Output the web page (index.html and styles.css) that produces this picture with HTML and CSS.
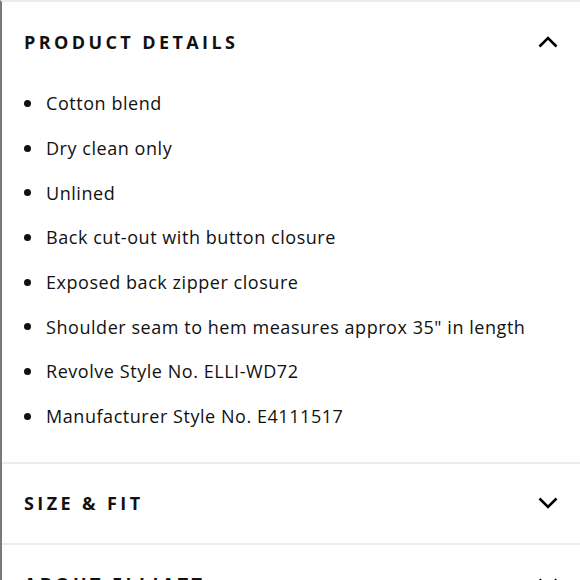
FILE: index.html
```html
<!DOCTYPE html>
<html>
<head>
<meta charset="utf-8">
<link rel="stylesheet" href="styles.css">
</head>
<body>
<div class="panel">
  <section class="acc open">
    <div class="acc-head">
      <h2 class="acc-title">PRODUCT DETAILS</h2>
      <svg class="chev" width="20" height="12" viewBox="0 0 20 12"><polyline points="1.5,10.5 10,2 18.5,10.5" fill="none" stroke="#000" stroke-width="2.6"/></svg>
    </div>
    <ul class="details">
      <li>Cotton blend</li>
      <li>Dry clean only</li>
      <li>Unlined</li>
      <li>Back cut-out with button closure</li>
      <li>Exposed back zipper closure</li>
      <li>Shoulder seam to hem measures approx 35" in length</li>
      <li>Revolve Style No. ELLI-WD72</li>
      <li>Manufacturer Style No. E4111517</li>
    </ul>
  </section>
  <section class="acc">
    <div class="acc-head">
      <h2 class="acc-title">SIZE &amp; FIT</h2>
      <svg class="chev" width="20" height="12" viewBox="0 0 20 12"><polyline points="1.5,1.5 10,10 18.5,1.5" fill="none" stroke="#000" stroke-width="2.6"/></svg>
    </div>
  </section>
  <section class="acc">
    <div class="acc-head">
      <h2 class="acc-title">ABOUT ELLIATT</h2>
      <svg class="chev" width="20" height="12" viewBox="0 0 20 12"><polyline points="1.5,1.5 10,10 18.5,1.5" fill="none" stroke="#000" stroke-width="2.6"/></svg>
    </div>
  </section>
</div>
</body>
</html>
```
FILE: styles.css
```css
html, body {
  margin: 0;
  padding: 0;
  background: #fff;
  overflow: hidden;
}
.panel {
  height: 580px;
  overflow: hidden;
  border-left: 2px solid #7a7a7a;
  border-top: 2px solid #ececec;
  box-sizing: border-box;
  font-family: "Open Sans", "Liberation Sans", sans-serif;
  color: #111;
}
.acc {
  border-bottom: 2px solid #ececec;
}
.acc-head {
  height: 79px;
  display: flex;
  align-items: center;
  justify-content: space-between;
  padding: 0 22px 0 22px;
}
.acc-title {
  margin: 0;
  font-size: 18px;
  font-weight: 700;
  letter-spacing: 3.4px;
  color: #111;
}
.chev {
  display: block;
}
.details {
  list-style: none;
  margin: 0;
  padding: 0 0 23px 22px;
}
.details li {
  display: flex;
  align-items: center;
  height: 44.7px;
  font-size: 18px;
  letter-spacing: 0.55px;
}
.details li::before {
  content: "";
  width: 7px;
  height: 7px;
  border-radius: 50%;
  background: #111;
  margin-right: 15px;
  flex: none;
}
```
